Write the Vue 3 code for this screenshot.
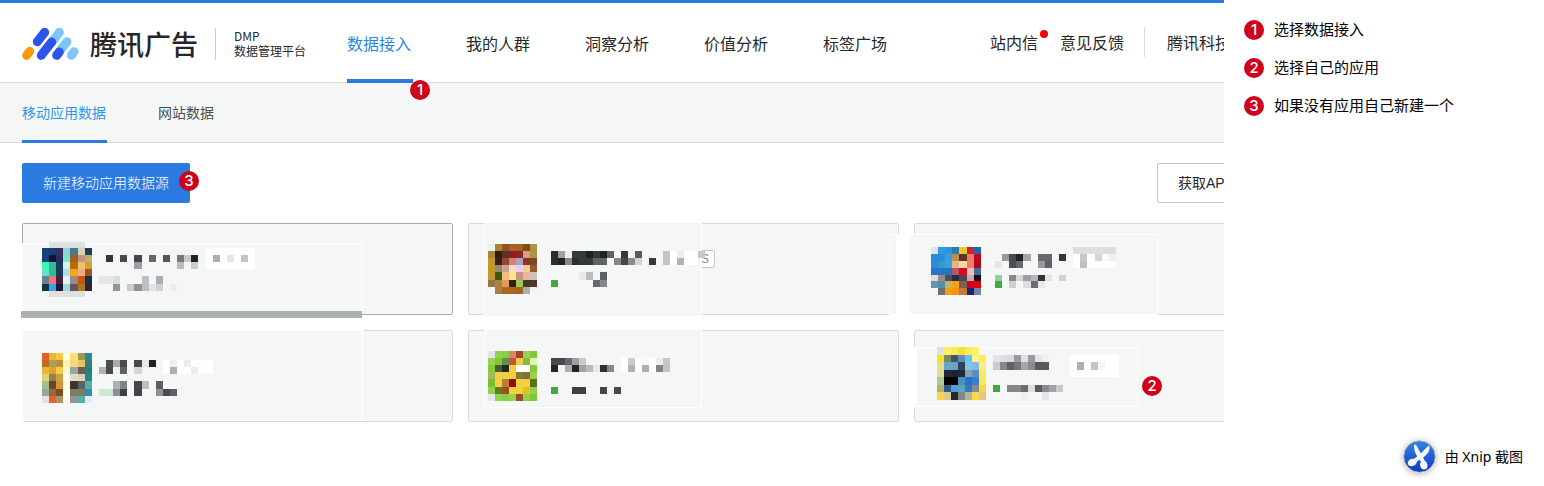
<script setup>
const navItems = ['数据接入', '我的人群', '洞察分析', '价值分析', '标签广场']
const subItems = ['移动应用数据', '网站数据']
const steps = ['选择数据接入', '选择自己的应用', '如果没有应用自己新建一个']

// runs: [row, first column, colours of consecutive cells]; bands: [column, row, width, height, colour]
const apps = [
  {
    bands: [[1, -0.8, 5, 7.7, 'dfe1e1'], [23, 0, 7, 3, 'ffffff']],
    runs: [
      [0, 0, '183f78 183f78 382c64 90d5d5 467a88 e2ceb0 173f5c'],
      [1, 0, '183f78 0d1436 2b2c60 82e6cb 9b602e c09482 c6ac6e'],
      [2, 0, '38f6b8 38b5a5 163c5c d0f4f4 b86c08 efc560 dd9b32'],
      [3, 0, '65e3c2 2ebd88 163c5c b5d9e8 f5a71c f0ac80 9c5526'],
      [4, 0, '6b7d98 f27378 48203e dff6f8 a08884 c55610 10343f'],
      [5, 0, '12343f 32a5e8 1c1830 a0dcd6 5f5860 ab7a1a 2c2240'],
      [1, 9, '343639 . 45494b . 45484b . 66696b . 515558 . 77797d cacbcd 1f2226'],
      [1, 24, 'adafb1 . e4e5e6 . c4c5c9'],
      [2, 13, '9c9da2 . . . . . bbbcbe . cacbcc'],
      [4, 8, 'e5e7e7 e5e7e7 dadddd . . . bdc1c3 . a8aeb1'],
      [5, 10, '909698 . c8cacc 909295 bcbfc1 e2e3e5 ced0d2 . ecefef']
    ]
  },
  {
    tag: 'S',
    bands: [],
    runs: [
      [0, 0, 'f0f1ed ab8530 925226 a46424 9f6220 7c4d12 b39246'],
      [1, 0, 'aa8434 2f1e10 5a3324 991820 8a2428 d3a080 b09242'],
      [2, 0, 'c4982a 382012 8f4a28 d3837a aca3bc 8c3428 7c4a22'],
      [3, 0, 'c2952c 8f8c6c d0a095 f8dcc8 e8d0ec f0cd90 955a32'],
      [4, 0, 'c4982a 3c5a16 f5bd7c fce48a c49580 ebb69a ccc0b8'],
      [5, 0, '907848 af7e44 dc9c60 2e2014 9cc950 4a3828 4c3828'],
      [6, 1, 'a38042 a86820 a86820 9f6428 adafa8 f3f3f1'],
      [1, 9, '292d30 9ea0a3 ecedee 36393c 36393c 1f2225 36393c 1f2225 5f6266 . 36393c . 5a5d60'],
      [1, 25, 'c4c4c6 ffffff ecedee ffffff ffffff c4c6c8'],
      [2, 9, '292d30 1f2225 85878a 2b2f31 36393c 36393c 606366 606366 . 85878a 45484c 8a8c90 d3d4d6 . 36393c'],
      [2, 25, 'c4c4c6 ffffff b0b2b4 ffffff ffffff'],
      [4, 13, 'e8e9eb babcbe . 5e6164'],
      [5, 9, '43a83f . . . . . 66686c 85878a']
    ]
  },
  {
    bands: [],
    runs: [
      [0, 0, 'e2e3e6 2d9de4 2f92e0 2c7ea8 e8c62c d01f2c 2466ae'],
      [1, 0, '2b8cdc 2b8cdc 379fdc c28e4c 5c3428 ee7a70 c4061a'],
      [2, 0, '2b8cdc 309acb 3ba0d8 e2b488 fcd4a6 ee7a70 b30418'],
      [3, 0, '2279ca 2279ca 2475c4 b85464 d80a20 e8c4b8 466a9c'],
      [4, 0, 'ecd6d4 9e8684 4c4c5a 242d40 484854 d4a4a4 200812'],
      [5, 0, '6794ae 5090a0 c8b464 f5a01e 80604c c80028 dc0014'],
      [6, 1, '70716e f39b12 f8940c c47838 18246c 7480a8'],
      [0, 20, 'dedede dedede dedede dedede dedede dedede'],
      [1, 10, '989a9c 484b4e 202428 a3a5a7 . 66696c 66696c . 34373a'],
      [1, 20, 'ffffff c8c8ca ffffff d4d5d7 fafafa efefef'],
      [2, 9, 'e4e6e7 . 4c4f52 66696c . . 96989a 606366'],
      [2, 20, 'ffffff bdbfc1 ffffff ffffff ffffff ffffff'],
      [4, 9, '93cf96 . 88898b d8d9db 9b9da0 b4b6b8 313438 e2e3e5 . d0d1d3'],
      [5, 9, '43a83f . cccecf . dedfe1 6c6f72 e8e9ea']
    ]
  },
  {
    bands: [],
    runs: [
      [0, 0, 'e2602c e8b834 f2c842 fffde0 f8e070 a09850 268c94'],
      [1, 0, 'c26c1c a4a060 bb9138 fcf4a8 f2d880 e8c45c 34807c'],
      [2, 0, 'e8b638 daa42c f8cc48 faf8d4 9ca4a0 6c5e4c 24807c'],
      [3, 0, 'e2d070 90844c c8a440 fffdec dce0c8 dfd0bc 24888c'],
      [4, 0, '9cc090 64481e d8923a fff8e4 40342a 5a6464 5aaca4'],
      [5, 0, 'a0a490 8c6c40 7c4e28 fffef0 7c7c68 7c7c64 2890b0'],
      [6, 0, 'e2e3e5 e8602a b09060 fffef0 94949a 50b0ac e8e9e9'],
      [1, 9, '4a4d51 a8aaad 484b4e . 45484c e6e7e9 1f2226'],
      [1, 17, 'ffffff eff0f1 ffffff ecedee ffffff fcfdfd ffffff'],
      [2, 8, 'b0b2b5 484c50 eff0f1 5e6164 . d4d5d7'],
      [2, 17, 'ffffff acaeb1 ffffff ffffff ededef fcfdfd ffffff'],
      [4, 10, 'adb2b4 80848a . 45484c bcbdbf . 5e6164'],
      [5, 8, 'cee8d0 cee8d0 8c9093 3c4043 . 404448 . . 909295 484c50 606366']
    ]
  },
  {
    bands: [],
    runs: [
      [0, 0, 'e3e5e8 8fd24c 8ccc48 d88860 9c4828 98d058 7cc838'],
      [1, 0, '98d050 80cc30 688c50 c85438 f0cc40 80bc40 dff4b4'],
      [2, 0, '84cc34 4c5c34 242822 f4d040 ffffff ffffff 80cc38'],
      [3, 0, 'a0bc58 f0d040 ecd040 f4d040 84783c 7c7430 9cd050'],
      [4, 0, '7cbc34 f4d040 b88030 8c1010 f4d040 f4d040 60701c'],
      [5, 0, '94d050 607c20 9c5020 f4d040 f4d040 e4c020 94d050'],
      [6, 0, 'e3e5e8 90d44c 88cc40 98d058 9c4c24 90d04c 7cc838'],
      [1, 9, '45494c 45494c 66696c 9ea0a3 c8cacc'],
      [1, 19, 'ffffff c8cacc ffffff f8f8f9 ffffff ecedee c6c7c9'],
      [2, 9, '202428 f4f4f5 acaeb1 202428 a0a3a5 b8babc e8e9ea 2d3134 85898c'],
      [2, 19, 'ffffff b0b2b4 ffffff acadb4 ffffff 808288 c4c4c6'],
      [5, 9, '43a83f . . 3c4043 3c4043 . . 43474a . 45494c']
    ]
  },
  {
    badge: 2,
    bands: [[19, 1, 7, 3, 'ffffff']],
    runs: [
      [0, 0, 'e0e1e3 fcf068 faec54 f8de40 faec54 fcf068'],
      [1, 0, 'f8e02c 788860 405470 6090b0 68c0f0 f8f490 fcec58'],
      [2, 0, 'e0e088 68a4c8 68a4c4 304058 78c8ec 88b8dc f8f080'],
      [3, 0, 'd8e094 20283a 1c242c 20283a 80a4b4 5c8cc0 f8e860'],
      [4, 0, 'b4c8a0 000000 000000 4890c0 2c70cc 3c80c8 f8e860'],
      [5, 0, 'b4b078 305c84 48a0dc 60a4bc 3078c4 848c98 f8d840'],
      [6, 0, 'fcd848 d8cc90 24282c 84868c b8b490 fcd848 e4c888'],
      [1, 8, 'e2e3e5 e0e1e2 d8dadc 989a9e e0e1e2 989a9e e4e5e6 eff0f0'],
      [2, 8, 'c8cacc 85878b 5e6165 74777a a4a6a9 8a8c90 56595d 56595d'],
      [2, 20, 'adafb1 . c4c5c9 f3f4f6'],
      [5, 8, '43a83f . 85878a 85878a 6c6f72 dcdee0 56595d 888a8e a0a2a5 c8cacc'],
      [6, 12, 'f0f0f1 . . e4e5e7']
    ]
  }
]

const cellsOf = (app) =>
  app.runs.flatMap(([row, col, colours]) =>
    colours
      .split(' ')
      .map((fill, i) => ({ x: col + i, y: row, fill }))
      .filter((cell) => cell.fill !== '.')
  )
</script>

<template>
  <div class="page">
    <div class="shot">
      <div class="app">
        <header class="header">
          <a class="brand" href="#" aria-label="腾讯广告">
            <svg class="mark" viewBox="0 0 171 96" aria-hidden="true">
              <g fill="none" stroke-width="27" stroke-linecap="round">
                <path stroke="#f8990f" d="M14 82L23 70" />
                <path stroke="#2b54ec" d="M46 41L68 13" />
                <path stroke="#7cc6fd" d="M91 41L112 13" />
                <path stroke="#2b54ec" d="M58 82L89 42" />
                <path stroke="#7cc6fd" d="M111 72L135 41" />
                <path stroke="#2b54ec" d="M104 82L112 72" />
                <path stroke="#7cc6fd" d="M148 82L156 71" />
              </g>
            </svg>
            <span class="wordmark">腾讯广告</span>
          </a>
          <div class="product"><span>DMP</span><span>数据管理平台</span></div>
          <nav class="nav">
            <a v-for="(item, i) in navItems" :key="item" href="#" :class="{ active: i === 0 }">
              {{ item }}<span v-if="i === 0" class="badge badge-nav">1</span>
            </a>
          </nav>
          <div class="account">
            <a class="inbox" href="#">站内信</a>
            <a class="feedback" href="#">意见反馈</a>
            <span class="divider"></span>
            <a class="company" href="#">腾讯科技</a>
          </div>
        </header>
        <nav class="subnav">
          <a v-for="(item, i) in subItems" :key="item" href="#" :class="{ active: i === 0 }">{{ item }}</a>
        </nav>
        <main class="main">
          <div class="toolbar">
            <button class="create" type="button">新建移动应用数据源<span class="badge badge-create">3</span></button>
            <button class="api" type="button">获取API</button>
          </div>
          <ul class="cards">
            <li v-for="(app, i) in apps" :key="i" class="card" :class="'card-' + (i + 1)">
              <span v-if="app.tag" class="tag">{{ app.tag }}</span>
              <div class="patch"></div>
              <svg class="mosaic" viewBox="0 0 45 9" preserveAspectRatio="none" shape-rendering="crispEdges" aria-hidden="true">
                <rect v-for="(b, n) in app.bands" :key="'b' + n" :x="b[0]" :y="b[1]" :width="b[2]" :height="b[3]" :fill="'#' + b[4]" />
                <rect v-for="(c, n) in cellsOf(app)" :key="n" :x="c.x" :y="c.y" width="1" height="1" :fill="'#' + c.fill" />
              </svg>
              <span v-if="app.badge" class="badge badge-card">{{ app.badge }}</span>
            </li>
          </ul>
        </main>
      </div>
    </div>
    <aside class="notes">
      <ol class="steps">
        <li v-for="(step, i) in steps" :key="step"><span class="badge">{{ i + 1 }}</span><span class="step">{{ step }}</span></li>
      </ol>
      <footer class="credit">
        <svg class="xnip" viewBox="0 0 100 100" aria-hidden="true">
          <defs>
            <linearGradient id="xnip-fill" x1="0" y1="0" x2="0" y2="1">
              <stop offset="0" stop-color="#2f86e8" />
              <stop offset="1" stop-color="#0d3cc0" />
            </linearGradient>
          </defs>
          <circle cx="50" cy="50" r="48" fill="url(#xnip-fill)" stroke="#b9b4ae" stroke-width="3" />
          <g fill="#f4f6fb">
            <path d="M34 13C32 28 36 40 45 52L56 68L66 62L58 48L41 17Z" />
            <path d="M80 17C83 31 76 43 62 52L38 68L29 60L50 45L75 19Z" />
            <ellipse cx="28" cy="68" rx="14" ry="11" transform="rotate(-20 28 68)" />
            <ellipse cx="63" cy="76" rx="11" ry="13" transform="rotate(-15 63 76)" />
          </g>
        </svg>
        <span>由 Xnip 截图</span>
      </footer>
    </aside>
  </div>
</template>

<style>
body {
  margin: 0;
  background: #fff;
}
</style>

<style scoped>
.page {
  display: flex;
  min-height: 100vh;
  font-family: "Noto Sans CJK SC", sans-serif;
  color: #25282c;
}
.page *,
.page *::before,
.page *::after {
  box-sizing: border-box;
}
a {
  color: inherit;
  text-decoration: none;
}
ul,
ol {
  list-style: none;
  margin: 0;
  padding: 0;
}
.shot {
  flex: 1;
  min-width: 0;
  overflow: hidden;
}
/* the application is wider than its frame and runs out of view on the right */
.app {
  width: calc(100% + 143px);
}
.header {
  display: flex;
  align-items: stretch;
  height: 83px;
  padding: 0 136px 0 22px;
  border-top: 3px solid #2b7ae0;
  border-bottom: 1px solid #d9dcdc;
  white-space: nowrap;
}
.brand {
  display: flex;
  align-items: center;
  gap: 11px;
  padding-top: 3px;
}
.mark {
  width: 57px;
  height: 32px;
}
.wordmark {
  padding-bottom: 1px;
  font-size: 27px;
  font-weight: 500;
  line-height: 31px;
  color: #262626;
}
.product {
  display: flex;
  flex-direction: column;
  align-self: center;
  width: 132px;
  height: 32px;
  margin: 2px 0 0 17px;
  padding-left: 18px;
  border-left: 1px solid #ccc;
  font-size: 12px;
  line-height: 15px;
}
.nav {
  display: flex;
  gap: 53px;
  font-size: 16px;
}
.nav a {
  position: relative;
  width: 66px;
  line-height: 80px;
}
.nav .active {
  color: #2b86e4;
}
.nav .active::after {
  content: "";
  position: absolute;
  left: 0;
  right: 0;
  bottom: -1px;
  height: 4px;
  background: #2b7ae0;
}
.account {
  display: flex;
  align-items: center;
  margin-left: auto;
  font-size: 16px;
  line-height: 28px;
  padding-bottom: 1px;
}
.inbox {
  position: relative;
}
.inbox::after {
  content: "";
  position: absolute;
  top: 2px;
  right: -10px;
  width: 8px;
  height: 8px;
  border-radius: 50%;
  background: #f5000a;
}
.feedback {
  margin-left: 22px;
}
.divider {
  width: 1px;
  height: 30px;
  margin: 0 22px 0 20px;
  background: #d9dcdc;
}
.subnav {
  display: flex;
  gap: 51px;
  height: 60px;
  padding-left: 22px;
  border-bottom: 1px solid #d9dcdc;
  background: #f5f7f6;
  font-size: 14px;
  line-height: 59px;
  color: #4c4f52;
}
.subnav a {
  height: 60px;
}
.subnav .active {
  padding-right: 1px;
  border-bottom: 3px solid #2b7ae0;
  color: #2f96f0;
}
.main {
  padding: 20px 22px;
}
.toolbar {
  display: flex;
  justify-content: space-between;
}
button {
  height: 40px;
  font-family: inherit;
  font-size: 14px;
  border-radius: 2px;
}
.create {
  position: relative;
  padding: 0 21px 2px;
  border: 0;
  background: #2b7ae0;
  color: #fff;
  font-weight: 300;
}
.api {
  width: 188px;
  padding: 0 20px 2px;
  border: 1px solid #c4c6c6;
  background: #fff;
  color: #25282c;
  font-family: "Liberation Sans", "Noto Sans CJK SC", sans-serif;
  text-align: left;
}
.cards {
  display: grid;
  grid-template-columns: repeat(3, 1fr);
  gap: 15px;
  margin-top: 20px;
}
.card {
  position: relative;
  height: 92px;
  border: 1px solid #d9dbdb;
  border-radius: 2px;
  background: #f5f7f6;
}
.card-1 {
  border-color: #a9acac;
}
.patch {
  position: absolute;
  border: 1px solid #fff;
  background: #f5f7f6;
}
.mosaic {
  position: absolute;
  left: 19px;
  width: 320px;
  height: 64px;
  overflow: visible;
}
.card-1 .patch {
  left: -2px;
  top: 19px;
  width: 341px;
  height: 68px;
  border-left-width: 2px;
  border-bottom: 0;
  box-shadow: 0 7px #adb0b0;
}
.card-1 .mosaic {
  top: 24px;
}
.card-2 .patch {
  left: 15px;
  top: -1px;
  width: 218px;
  height: 93px;
  border-width: 0 1px;
}
.card-2 .mosaic {
  top: 20px;
  width: 315px;
}
.card-3 .patch {
  left: -5px;
  top: 10px;
  width: 248px;
  height: 81px;
  border-left: 0;
}
.card-3 .patch::before {
  content: "";
  position: absolute;
  left: -21px;
  top: -1px;
  width: 21px;
  height: 81px;
  border: 1px solid #fff;
  border-right-width: 14px;
  background: #f5f7f6;
}
.card-3 .mosaic {
  left: 16px;
  top: 23px;
  height: 62px;
}
.card-4 .patch {
  left: -1px;
  top: -1px;
  width: 341px;
  height: 91px;
}
.card-4 .mosaic {
  top: 22px;
}
.card-5 .patch {
  left: 15px;
  top: -1px;
  width: 218px;
  height: 78px;
  border-top: 0;
}
.card-5 .mosaic {
  top: 20px;
  width: 315px;
}
.card-6 .patch {
  left: -1px;
  top: 16px;
  width: 224px;
  height: 60px;
  border-left-width: 3px;
}
.card-6 .mosaic {
  left: 22px;
  top: 16px;
  width: 315px;
  height: 68px;
}
.tag {
  position: absolute;
  left: 226px;
  top: 26px;
  width: 20px;
  height: 18px;
  padding-left: 5px;
  border: 1px solid #c4c6c6;
  border-radius: 2px;
  background: #fff;
  color: #85888c;
  font-family: "Liberation Sans", sans-serif;
  font-size: 12px;
  line-height: 16px;
}
.badge {
  display: inline-block;
  width: 20px;
  height: 20px;
  border-radius: 50%;
  background: #d0021b;
  color: #fff;
  font-family: Inter, sans-serif;
  font-size: 15px;
  font-weight: 500;
  line-height: 20px;
  text-align: center;
}
.badge-nav {
  position: absolute;
  left: 63px;
  bottom: -18px;
  z-index: 1;
}
.badge-create {
  position: absolute;
  right: -9px;
  top: 8px;
}
.badge-card {
  position: absolute;
  left: 227px;
  top: 45px;
}
.notes {
  display: flex;
  flex-direction: column;
  justify-content: space-between;
  width: 320px;
  padding: 20px 21px 13px 20px;
  background: #fff;
  color: #000;
}
.steps {
  display: flex;
  flex-direction: column;
  gap: 18px;
  font-size: 15px;
}
.steps li {
  display: flex;
  gap: 10px;
}
.step {
  line-height: 18px;
}
.credit {
  display: flex;
  align-items: center;
  justify-content: flex-end;
  gap: 9px;
  font-family: "Noto Sans", "Noto Sans CJK SC", sans-serif;
  font-size: 14px;
  line-height: 32px;
}
.xnip {
  width: 33px;
  height: 33px;
  border-radius: 50%;
  box-shadow: 0 1px 6px rgba(0, 0, 0, 0.3);
}
</style>
